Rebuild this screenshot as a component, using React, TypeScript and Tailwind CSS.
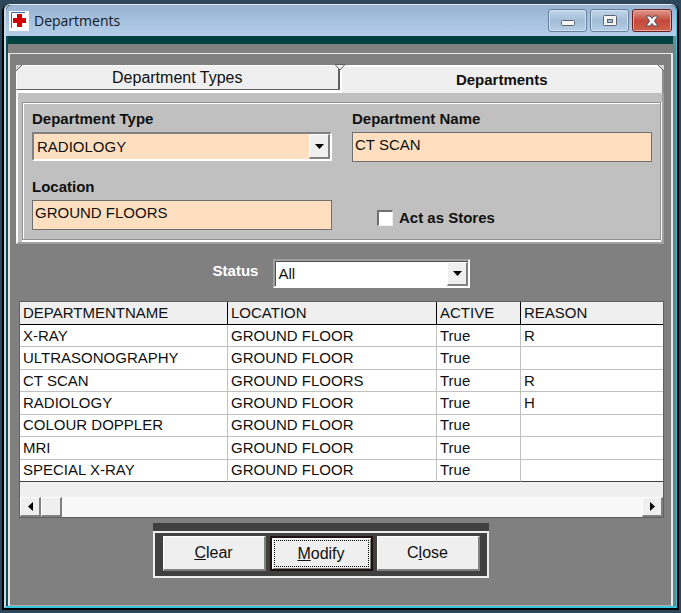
import { useState } from "react";
import type { ReactNode } from "react";

const rows = [
  ["X-RAY", "GROUND FLOOR", "True", "R"],
  ["ULTRASONOGRAPHY", "GROUND FLOOR", "True", ""],
  ["CT SCAN", "GROUND FLOORS", "True", "R"],
  ["RADIOLOGY", "GROUND FLOOR", "True", "H"],
  ["COLOUR DOPPLER", "GROUND FLOOR", "True", ""],
  ["MRI", "GROUND FLOOR", "True", ""],
  ["SPECIAL X-RAY", "GROUND FLOOR", "True", ""],
];

const raised =
  "border-t border-l border-b-2 border-r-2 border-t-white border-l-white border-b-[#808080] border-r-[#808080] bg-[#efefef]";

function DropArrow() {
  return (
    <span
      className={`pointer-events-none absolute top-0 right-0 bottom-0 flex w-[21px] items-center justify-center ${raised}`}
    >
      <svg width="9" height="5" viewBox="0 0 9 5" aria-hidden="true">
        <path d="M0 0h9L4.500 5z" fill="#000" />
      </svg>
    </span>
  );
}

function TitleBar() {
  const plain =
    "flex h-[23px] w-[39px] items-center justify-center rounded-[3px] border border-[#68809c] bg-linear-to-b from-[#c3d6ea] via-[#a3bdd8] to-[#b6cee6] shadow-[inset_0_0_0_1px_#cfe0f2]";
  return (
    <header className="flex h-[31px] items-center rounded-t-md bg-linear-to-b from-[#97b2d1] to-[#b5cfea] pr-1 pl-[3px]">
      <svg width="20" height="20" viewBox="0 0 20 20" aria-hidden="true">
        <path d="M0 0h20v20H0z" fill="#fff" />
        <path d="M2.500 17V1.500H16" fill="none" stroke="#3b6ea5" />
        <path d="M8 3h5v4h4v5h-4v4H8v-4H4V7h4z" fill="#d40000" />
      </svg>
      <h1 className="flex-1 pl-[5px] font-['Open_Sans','Noto_Sans',sans-serif] text-sm text-[#111827]">
        Departments
      </h1>
      <div className="flex gap-[3px]">
        <button type="button" aria-label="Minimize" className={plain}>
          <svg width="14" height="12" viewBox="0 0 14 12" aria-hidden="true">
            <rect x="0.500" y="5.500" width="13" height="5" rx="1" fill="#f4f4f4" stroke="#5b6470" />
          </svg>
        </button>
        <button type="button" aria-label="Maximize" className={plain}>
          <svg width="14" height="12" viewBox="0 0 14 12" aria-hidden="true">
            <rect x="0.500" y="0.500" width="13" height="10" rx="1" fill="#f4f4f4" stroke="#5b6470" />
            <rect x="4.500" y="4.500" width="5" height="3" fill="#a3bdd8" stroke="#5b6470" />
          </svg>
        </button>
        <button
          type="button"
          aria-label="Close window"
          className="flex h-[23px] w-10 items-center justify-center rounded-[3px] border border-[#6b1c1c] bg-linear-to-b from-[#dd9a8e] via-[#c4483a] to-[#cf5f4a] shadow-[inset_0_0_0_1px_#e5a79b]"
        >
          <svg width="14" height="12" viewBox="0 0 14 12" aria-hidden="true">
            <path
              d="M1 1h4l2 2.500L9 1h4L9.500 6l3.500 5H9L7 8.500 5 11H1l3.500-5z"
              fill="#f7f7f7"
              stroke="#574a55"
              strokeLinejoin="round"
            />
          </svg>
        </button>
      </div>
    </header>
  );
}

function FormButton({ children, focused = false }: { children: ReactNode; focused?: boolean }) {
  return (
    <button
      type="button"
      className={`flex h-[35px] w-[103px] items-center justify-center text-base ${
        focused
          ? "border-2 border-[#201010] bg-[#efefef] p-[2px] shadow-[inset_1px_1px_#fff,inset_-1px_-1px_#808080]"
          : raised
      }`}
    >
      {focused ? (
        <span className="flex h-full w-full items-center justify-center border border-dotted border-black">
          <span>{children}</span>
        </span>
      ) : (
        <span>{children}</span>
      )}
    </button>
  );
}

export default function App() {
  const [type, setType] = useState("RADIOLOGY");
  const [name, setName] = useState("CT SCAN");
  const [location, setLocation] = useState("GROUND FLOORS");
  const [stores, setStores] = useState(false);
  const [status, setStatus] = useState("All");
  const label = "block h-5 font-bold leading-5";
  const field =
    "mt-[3px] block h-[30px] w-full border border-[#707070] bg-[#ffdfc0] pl-[2px] pb-[5px] text-[15px] outline-none";

  return (
    <div className="min-h-screen bg-[#2d465a] px-[2px] pt-1 pb-1 font-['Liberation_Sans',Arial,sans-serif] text-[15px] leading-5 text-[#101010]">
      <div className="rounded-t-lg border-r-2 border-b-2 border-l-2 border-black">
        <div className="rounded-t-md border-t border-r border-b-2 border-l-2 border-t-[#dfeaf3] border-r-[#38c4dc] border-b-[#38c4dc] border-l-[#c6d9e6]">
          <TitleBar />
          <main className="border-r-[3px] border-l-2 border-r-[#5c8c90] border-l-[#0b5058] bg-[#808080]">
            <div className="h-2 bg-[#004040]" />
            <div className="h-[9px]" />
            <section className="border-x-2 border-t border-b border-[#e8e8e8] border-b-[#b0b0b0] pt-[11px] pr-[7px] pb-[27px] pl-[6px]">
              <div role="tablist" className="flex h-[28px] items-start bg-white">
                <button
                  type="button"
                  role="tab"
                  aria-selected="false"
                  className="relative h-[25px] flex-1 border-t border-r-2 border-b border-l border-t-white border-r-[#606060] border-b-[#606060] border-l-white bg-[#efefef] text-base"
                >
                  Department Types
                  <svg className="absolute -top-px -left-px" width="6" height="6" aria-hidden="true">
                    <path d="M0 0h6L0 6z" fill="#d8d8d8" />
                    <path d="M6 0L0 6" stroke="#606060" />
                  </svg>
                </button>
                <button
                  type="button"
                  role="tab"
                  aria-selected="true"
                  className="relative h-full flex-1 border-t-2 border-r-2 border-l-2 border-t-white border-r-[#909090] border-l-white bg-[#efefef] font-bold"
                >
                  Departments
                  <svg className="absolute -top-[3px] -left-[7px]" width="10" height="7" aria-hidden="true">
                    <path d="M0 0.500h10L5 6z" fill="#efefef" stroke="#606060" />
                  </svg>
                  <svg className="absolute -top-[2px] -right-[2px]" width="6" height="6" aria-hidden="true">
                    <path d="M0 0h6v6z" fill="#d8d8d8" />
                    <path d="M0 0l6 6" stroke="#606060" />
                  </svg>
                </button>
              </div>
              <div
                role="tabpanel"
                className="border-r-2 border-b-2 border-l-2 border-r-[#a0a0a0] border-b-[#a0a0a0] border-l-white bg-[#c0c0c0] pt-[9px] pr-px pb-[2px] pl-1"
              >
                <div className="border border-[#909090] shadow-[inset_0_1px_#fff,inset_1px_0_#fff,0_2px_#fff,1px_0_#fff]">
                  <div className="grid grid-cols-2 gap-x-5 pt-1 pr-[8px] pb-[9px] pl-[9px]">
                    <div className="pt-[2px]">
                      <label htmlFor="dept-type" className={label}>Department Type</label>
                      <div className="mt-[3px] h-[29px] border-t-2 border-r-2 border-b-2 border-l-2 border-t-[#808080] border-r-white border-b-white border-l-[#808080] bg-[#ffdfc0]">
                        <div className="relative h-full">
                          <select
                            id="dept-type"
                            value={type}
                            onChange={(e) => setType(e.target.value)}
                            className="block h-full w-full appearance-none pl-[3px] outline-none"
                          >
                            <option>RADIOLOGY</option>
                          </select>
                          <DropArrow />
                        </div>
                      </div>
                    </div>
                    <div className="pt-[2px]">
                      <label htmlFor="dept-name" className={label}>Department Name</label>
                      <input
                        id="dept-name"
                        value={name}
                        onChange={(e) => setName(e.target.value)}
                        className={field}
                      />
                    </div>
                    <div className="pt-[15px]">
                      <label htmlFor="location" className={label}>Location</label>
                      <input
                        id="location"
                        value={location}
                        onChange={(e) => setLocation(e.target.value)}
                        className={field}
                      />
                    </div>
                    <label className="flex items-center gap-[6px] self-end pb-[2px] pl-[25px] font-bold">
                      <input
                        type="checkbox"
                        checked={stores}
                        onChange={(e) => setStores(e.target.checked)}
                        className="h-4 w-4 appearance-none border-t-2 border-r border-b border-l-2 border-t-[#707070] border-r-[#efefef] border-b-[#efefef] border-l-[#707070] bg-white checked:bg-[#404040]"
                      />
                      Act as Stores
                    </label>
                  </div>
                </div>
              </div>

              <div className="mt-[15px] flex items-start justify-center gap-[15px] pl-[3px]">
                <label htmlFor="status" className="pt-[2px] font-bold text-white">Status</label>
                <div className="h-[29px] w-[197px] border-2 border-t-[#a0a0a0] border-r-white border-b-white border-l-[#a0a0a0] bg-white">
                  <div className="relative h-full border-t border-l border-[#505050]">
                    <select
                      id="status"
                      value={status}
                      onChange={(e) => setStatus(e.target.value)}
                      className="block h-full w-full appearance-none pl-[2px] outline-none"
                    >
                      <option>All</option>
                    </select>
                    <DropArrow />
                  </div>
                </div>
              </div>

              <div className="mt-[13px] ml-[3px] border border-[#606060] bg-[#efefef]">
                <table className="h-[180px] w-full table-fixed border-separate border-spacing-0 bg-white text-left">
                  <colgroup>
                    <col className="w-[208px]" />
                    <col className="w-[209px]" />
                    <col className="w-[84px]" />
                    <col />
                  </colgroup>
                  <thead>
                    <tr className="h-[23px] bg-[#efefef]">
                      {["DEPARTMENTNAME", "LOCATION", "ACTIVE", "REASON"].map((h) => (
                        <th key={h} className="border-r border-b border-black p-0 pl-[3px] font-normal last:border-r-0">
                          {h}
                        </th>
                      ))}
                    </tr>
                  </thead>
                  <tbody>
                    {rows.map((r) => (
                      <tr key={r[0]} className="group">
                        {r.map((c, i) => (
                          <td
                            key={i}
                            className="border-r border-b border-[#c0c0c0] p-0 pl-[3px] group-last:border-b-[#404040] last:border-r-0"
                          >
                            {c}
                          </td>
                        ))}
                      </tr>
                    ))}
                  </tbody>
                </table>
                <div className="h-[15px]" />
                <div className="flex h-5 bg-[#f8f8f8]">
                  <button type="button" aria-label="Scroll left" className={`flex w-[21px] items-center justify-center ${raised}`}>
                    <svg width="5" height="9" viewBox="0 0 5 9" aria-hidden="true">
                      <path d="M5 0v9L0 4.500z" />
                    </svg>
                  </button>
                  <div className={`w-[21px] ${raised}`} />
                  <div className="flex-1" />
                  <button type="button" aria-label="Scroll right" className={`flex w-[21px] items-center justify-center ${raised}`}>
                    <svg width="5" height="9" viewBox="0 0 5 9" aria-hidden="true">
                      <path d="M0 0v9L5 4.500z" />
                    </svg>
                  </button>
                </div>
              </div>

              <div className="mt-[5px] ml-[137px] w-[336px]">
                <div className="h-2 bg-[#404040]" />
                <div className="flex justify-center gap-1 border-2 border-[#efefef] bg-[#404040] pt-[3px] pb-[5px]">
                  <FormButton>
                    <u>C</u>lear
                  </FormButton>
                  <FormButton focused>
                    <u>M</u>odify
                  </FormButton>
                  <FormButton>
                    C<u>l</u>ose
                  </FormButton>
                </div>
              </div>
            </section>
          </main>
        </div>
      </div>
    </div>
  );
}
